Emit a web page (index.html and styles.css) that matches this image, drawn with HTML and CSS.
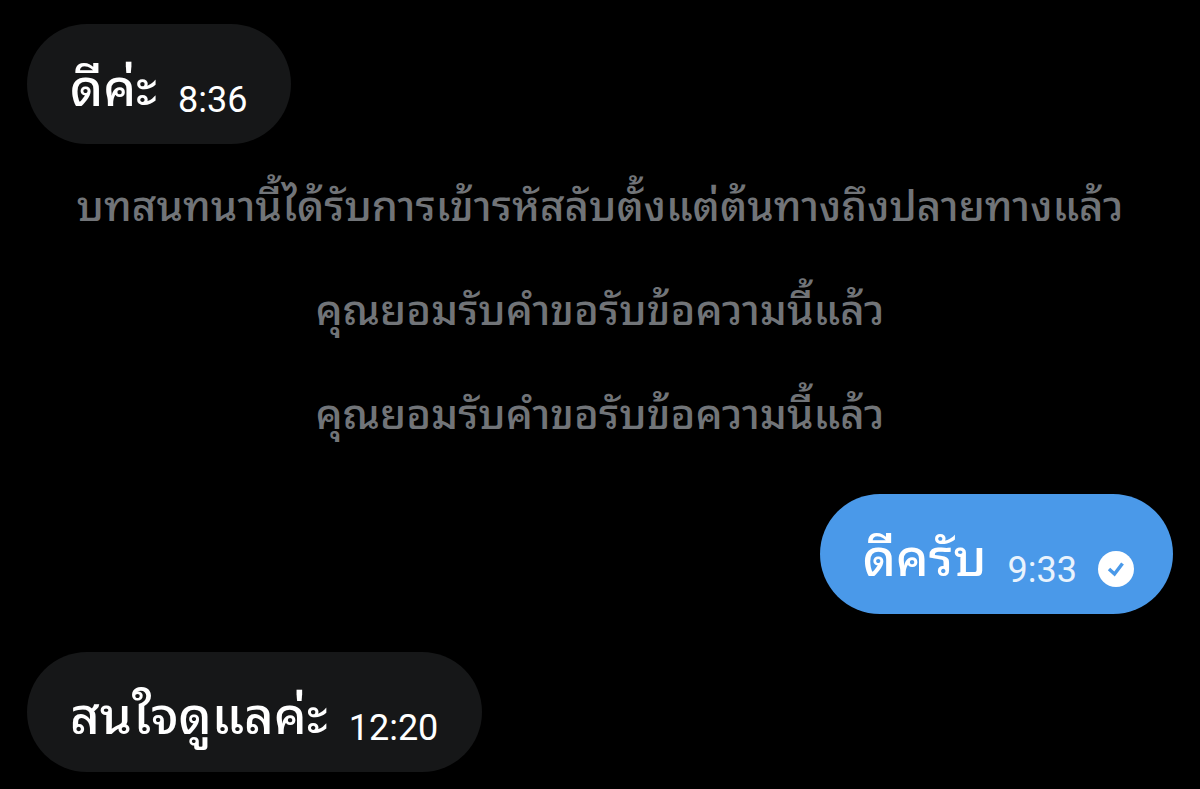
FILE: index.html
```html
<!DOCTYPE html>
<html lang="th">
<head>
    <meta charset="UTF-8">
    <meta name="viewport" content="width=device-width, initial-scale=1.0">
    <title>ข้อความ</title>
    <link rel="stylesheet" href="styles.css">
</head>
<body>

    <main class="chat">
        <div class="bubble received">
            <span class="text">ดีค่ะ</span>
            <time class="time">8:36</time>
        </div>

        <!-- System notices -->
        <div class="notices">
            <p class="notice">บทสนทนานี้ได้รับการเข้ารหัสลับตั้งแต่ต้นทางถึงปลายทางแล้ว</p>
            <p class="notice">คุณยอมรับคำขอรับข้อความนี้แล้ว</p>
            <p class="notice">คุณยอมรับคำขอรับข้อความนี้แล้ว</p>
        </div>

        <div class="bubble sent">
            <span class="text">ดีครับ</span>
            <time class="time">9:33</time>
            <svg class="check" viewBox="0 0 36 36" aria-hidden="true">
                <circle cx="18" cy="18" r="18" fill="#fff"/>
                <path d="M11 18l5.500 5L24.500 12.500" fill="none" stroke="#4a99e9" stroke-width="3.500"/>
            </svg>
        </div>

        <div class="bubble received">
            <span class="text">สนใจดูแลค่ะ</span>
            <time class="time">12:20</time>
        </div>
    </main>

</body>
</html>
```

FILE: styles.css
```css
* {
    box-sizing: border-box;
}

body {
    margin: 0;
    background-color: #000;
    color: #fff;
    font-family: Roboto, "Noto Sans Thai Looped", Thonburi, Loma, Waree, Garuda, sans-serif;
}

.chat {
    display: flex;
    flex-direction: column;
    padding: 24px 27px 17px;
}

.bubble {
    display: flex;
    align-items: flex-end;
    gap: 21px;
    padding: 32px 44px 22px 43px;
    border-radius: 60px;
}

.received {
    align-self: flex-start;
    background-color: #161718;
}

.sent {
    align-self: flex-end;
    background-color: #4a99e9;
    margin-bottom: 38px;
    padding-right: 39px;
}

.text {
    font-size: 51px;
    font-weight: 500;
    line-height: 66px;
}

.time {
    font-size: 36px;
    line-height: 44px;
}

.sent .time {
    color: #e9f3fd;
}

.check {
    width: 36px;
    height: 36px;
    margin-bottom: 5px;
}

.notices {
    padding: 11px 0 27px;
    text-align: center;
}

.notice {
    margin: 0;
    font-size: 42px;
    font-weight: 500;
    line-height: 104px;
    color: #717478;
}
```
